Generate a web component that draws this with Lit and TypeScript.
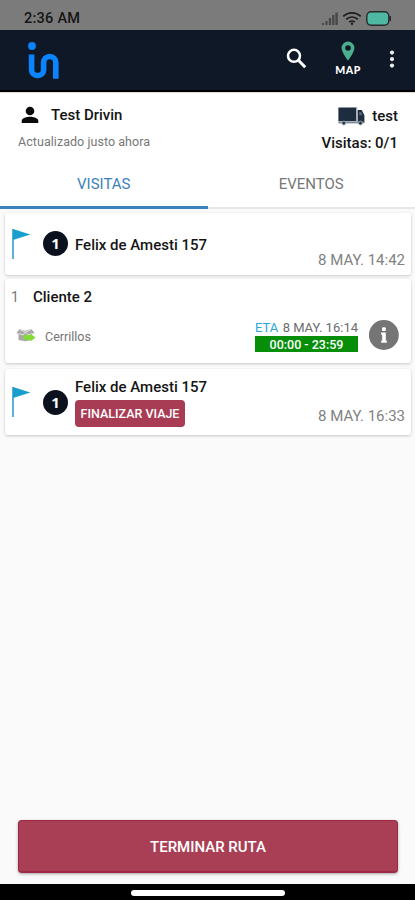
import { LitElement, html, css, svg } from "lit";
import { customElement, property } from "lit/decorators.js";

@customElement("status-bar")
class StatusBar extends LitElement {
  static styles = css`
    :host { display: flex; height: 30px; box-sizing: border-box; padding: 8px 23px 0 24px; background: #7b7b7b; justify-content: space-between; align-items: flex-start; }
    .time { font-size: 14.5px; font-weight: 500; line-height: 22px; letter-spacing: 0.25px; color: #151515; }
    .icons { display: block; }
  `;
  render() {
    return html`<span class="time">2:36 AM</span>
      <svg class="icons" width="70" height="20" viewBox="322 8 70 20">
        <g fill="#484848">
          <rect x="322" y="23" width="2" height="2" /><rect x="325.4" y="21" width="2.2" height="4" />
          <rect x="328.8" y="18" width="2.3" height="7" /><rect x="332.2" y="15" width="2.3" height="10" />
          <rect x="335.4" y="12.5" width="2.4" height="12.5" />
        </g>
        <g fill="none" stroke="#1d1d1d" stroke-width="1.7">
          <path d="M343.2 16.4a12.6 12.6 0 0 1 17.6 0" /><path d="M346.2 19.4a8.2 8.2 0 0 1 11.6 0" /><path d="M349.2 22.2a4 4 0 0 1 5.6 0" />
        </g>
        <circle cx="352" cy="23.8" r="1.2" fill="#1d1d1d" />
        <rect x="366.8" y="11.8" width="22" height="13.4" rx="4.4" fill="#4fb8a2" stroke="#292929" stroke-width="1.4" />
        <path d="M390.2 16v5" stroke="#292929" stroke-width="1.6" />
      </svg>`;
  }
}

@customElement("nav-bar")
class NavBar extends LitElement {
  static styles = css`
    :host { display: flex; height: 62px; box-sizing: border-box; background: #0f1826; border-bottom: 2px solid #000; padding: 0 17px 0 26px; justify-content: space-between; align-items: flex-start; }
    .logo { margin-top: 10px; }
    .actions { display: flex; }
    .search { margin: 17px 26px 0 0; }
    .map { display: flex; flex-direction: column; align-items: center; width: 30px; margin: 11px 23px 0 0; }
    .label { font: 900 10.5px/13px Lato, Inter, sans-serif; letter-spacing: 0.5px; color: #fff; margin-top: 3px; }
    .more { margin-top: 19px; }
    svg { display: block; }
  `;
  render() {
    return html`<svg class="logo" width="36" height="42" viewBox="26 40 36 42">
        <circle cx="32" cy="46" r="3.9" fill="#0a84ff" />
        <path d="M31.6 54.5V70a5.5 5.5 0 0 0 5.5 5.5h1a5.5 5.5 0 0 0 5.5-5.5v-7.5a6 6 0 0 1 6-6h.2a6 6 0 0 1 6 6v16.2" fill="none" stroke="#0a84ff" stroke-width="5.6" />
      </svg>
      <div class="actions">
        <svg class="search" width="22" height="24" viewBox="285 47 22 24">
          <circle cx="294" cy="55.8" r="6" fill="none" stroke="#fff" stroke-width="2.5" />
          <path d="M298.2 60l7 7.2" stroke="#fff" stroke-width="3" />
        </svg>
        <div class="map">
          <svg width="14" height="20" viewBox="0 0 14 20"><path fill="#4bae8e" fill-rule="evenodd" d="M7 .5A6.4 6.4 0 0 0 .6 7C.6 11.5 7 19.5 7 19.5S13.4 11.5 13.4 7A6.4 6.4 0 0 0 7 .5M7 4.2a2.8 2.8 0 1 1 0 5.6a2.8 2.8 0 0 1 0-5.6" /></svg>
          <span class="label">MAP</span>
        </div>
        <svg class="more" width="12" height="22" viewBox="386 49 12 22" fill="#e9ebef"><circle cx="392" cy="52.6" r="2.1" /><circle cx="392" cy="59.1" r="2.1" /><circle cx="392" cy="65.6" r="2.1" /></svg>
      </div>`;
  }
}

@customElement("route-header")
class RouteHeader extends LitElement {
  static styles = css`
    :host { display: block; background: #fff; border-top: 1px solid #deddd3; box-sizing: border-box; height: 117px; color: #141414; }
    .info { display: flex; justify-content: space-between; height: 72px; box-sizing: border-box; padding: 8px 17px 0 18px; }
    .row { display: flex; align-items: center; height: 27px; font-size: 15px; font-weight: 500; }
    .user { margin: 0 12px 0 3px; }
    .updated { font-size: 12.5px; line-height: 27px; color: #777; letter-spacing: 0.05px; }
    .right { display: flex; flex-direction: column; align-items: flex-end; }
    .truck { margin: 3px 7px 0 0; }
    .test { margin-top: 3px; }
    .count { font-size: 15px; line-height: 31px; font-weight: 500; }
    .tabs { display: flex; height: 44px; }
    .tab { flex: 1; box-sizing: border-box; text-align: center; font-size: 15px; line-height: 38px; color: #777; border-bottom: 2px solid #e8e8e8; }
    .active { color: #3d7fb8; border-bottom: 3px solid #3d82b8; }
  `;
  render() {
    return html`<div class="info">
        <div>
          <div class="row"><svg class="user" width="18" height="18" viewBox="0 0 18 18"><circle cx="9" cy="5" r="4.3" fill="#0b0b0b" /><path d="M.7 17v-2.1C.7 12 6 10.8 9 10.8s8.3 1.2 8.3 4.1V17z" fill="#0b0b0b" /></svg><span>Test Drivin</span></div>
          <div class="updated">Actualizado justo ahora</div>
        </div>
        <div class="right">
          <div class="row"><svg class="truck" width="27" height="19" viewBox="0 0 27 19">
            <path d="M.4.5h18v13.7H.4zM19.6 3h4.1l2.7 5.2v7.6h-6.8z" fill="#1d2c3f" /><path d="M.4 14.6h25.8v1.8H.4z" fill="#7d8997" />
            <path d="M21.2 5h2l1.4 3.2h-3.4z" fill="#52657a" /><path d="M18.9.5v14" stroke="#a9b2bc" stroke-width=".9" />
            <g fill="#27384b" stroke="#b6bec8" stroke-width=".8"><circle cx="5.8" cy="16.1" r="2" /><circle cx="22.4" cy="16.1" r="2" /></g>
          </svg><span class="test">test</span></div>
          <div class="count">Visitas: 0/1</div>
        </div>
      </div>
      <div class="tabs"><div class="tab active">VISITAS</div><div class="tab">EVENTOS</div></div>`;
  }
}

const flag = svg`<path d="M1 1v30" stroke="#4aa8cf" stroke-width="1.8" /><path d="M1 1l17.4 5.5L1 12z" fill="#199fcb" />`;

@customElement("depot-card")
class DepotCard extends LitElement {
  static styles = css`
    :host { display: flex; box-sizing: border-box; background: #fff; border-radius: 3px; box-shadow: 0 1px 3px rgba(0, 0, 0, 0.2); padding: 0 6px 0 7px; }
    .flag { margin: 15px 12px 0 0; flex: none; }
    .badge { flex: none; width: 25px; height: 25px; border-radius: 50%; background: #0c111e; color: #fff; font: 700 15px/25px "Noto Sans", sans-serif; text-align: center; margin: 18px 7px 0 0; }
    .flag.low { margin-top: 17px; }
    .badge.low { margin-top: 21px; }
    .body { flex: 1; padding-top: 22px; }
    .compact { padding-top: 8px; }
    .name { font-size: 15px; line-height: 20px; font-weight: 500; color: #151515; white-space: nowrap; }
    .finish { display: block; border: 0; width: 110px; height: 27px; border-radius: 4px; background: #a83c55; color: #fff; font: 500 12.5px/26px Roboto, sans-serif; padding: 0; margin-top: 3px; white-space: nowrap; }
    .when { font-size: 15px; line-height: 18px; color: #828282; align-self: flex-end; white-space: nowrap; margin-bottom: 6px; }
    .raised { margin-bottom: 10px; }
  `;
  @property() when = "";
  @property({ type: Boolean }) closing = false;
  render() {
    const low = this.closing ? "low" : "";
    return html`<svg class="flag ${low}" width="19" height="32" viewBox="0 0 19 32">${flag}</svg>
      <div class="badge ${low}">1</div>
      <div class="body ${this.closing ? "compact" : ""}">
        <div class="name">Felix de Amesti 157</div>
        ${this.closing ? html`<button class="finish">FINALIZAR VIAJE</button>` : ""}
      </div>
      <div class="when ${this.closing ? "raised" : ""}">${this.when}</div>`;
  }
}

@customElement("visit-card")
class VisitCard extends LitElement {
  static styles = css`
    :host { display: flex; flex-direction: column; box-sizing: border-box; background: #fff; border-radius: 3px; box-shadow: 0 1px 3px rgba(0, 0, 0, 0.2); padding: 8px 12px 0 6px; }
    .head { display: flex; line-height: 20px; font-size: 15px; }
    .num { width: 22px; color: #777; font-size: 14px; }
    .client { font-weight: 500; color: #151515; }
    .main { display: flex; align-items: flex-start; padding-top: 12px; }
    .box { margin: 9px 9px 0 5px; }
    .place { flex: 1; font-size: 12.5px; line-height: 18px; color: #747474; margin-top: 9px; }
    .eta { width: 103px; margin-right: 11px; }
    .line { display: flex; justify-content: space-between; font-size: 13px; line-height: 17px; color: #6c6c6c; white-space: nowrap; }
    .tag { color: #2ca6d6; }
    .window { background: #068e09; color: #fff; font-size: 12.5px; font-weight: 500; line-height: 17px; height: 16px; text-align: center; }
    .detail { display: block; margin-top: 1px; }
  `;
  render() {
    return html`<div class="head"><span class="num">1</span><span class="client">Cliente 2</span></div>
      <div class="main">
        <svg class="box" width="20" height="14" viewBox="0 0 20 14">
          <path d="M3.5 1l6 1.7L15.5 1l3 4-2.6 1v6L9.5 13.3 2.5 12V6L.5 5z" fill="#a7a7a7" />
          <path d="M3.5 1.5l6 2.5 6-2.5M9.5 4L7 7 2.5 5.5M9.5 4l2.5 3 4.5-1.5" fill="none" stroke="#e4e4e4" stroke-width="1" />
          <path d="M7.5 7h7V5.4l5 4-5 4v-1.600h-7z" fill="#83dc34" />
        </svg>
        <span class="place">Cerrillos</span>
        <div class="eta"><div class="line"><span class="tag">ETA</span><span>8 MAY. 16:14</span></div><div class="window">00:00 - 23:59</div></div>
        <svg class="detail" width="30" height="30" viewBox="0 0 30 30"><circle cx="14.8" cy="15" r="15" fill="#757575" /><rect x="13" y="7.2" width="3.8" height="3.8" rx="1" fill="#fff" /><path d="M12.2 12.600h4.600v8h1v2.200h-5.600v-2.200h1v-5.800h-1z" fill="#fff" /></svg>
      </div>`;
  }
}

@customElement("app-root")
class AppRoot extends LitElement {
  static styles = css`
    :host { display: flex; flex-direction: column; height: 900px; width: 415px; overflow: hidden; background: #fafafa; font-family: Roboto, "Liberation Sans", sans-serif; }
    .list { flex: 1; padding: 4px 4px 0 5px; }
    .first { height: 62px; margin-bottom: 4px; }
    .visit { height: 84px; margin-bottom: 6px; }
    .last { height: 66px; }
    .foot { padding: 0 17px 11px 18px; }
    .end { display: block; width: 100%; height: 53px; border: 1px solid #9d2847; border-bottom-width: 2px; border-radius: 4px; background: #a83f55; color: #fff; font: 500 15px Roboto, sans-serif; padding: 2px 0 0; box-shadow: 0 1px 3px rgba(0, 0, 0, 0.35); }
    .home { height: 16px; background: #000; display: flex; justify-content: center; align-items: center; }
    .pill { width: 154px; height: 6px; border-radius: 3px; background: #fff; margin-top: 1px; }
  `;
  render() {
    return html`<status-bar></status-bar>
      <nav-bar></nav-bar>
      <route-header></route-header>
      <div class="list">
        <depot-card class="first" when="8 MAY. 14:42"></depot-card>
        <visit-card class="visit"></visit-card>
        <depot-card class="last" when="8 MAY. 16:33" closing></depot-card>
      </div>
      <div class="foot"><button class="end">TERMINAR RUTA</button></div>
      <div class="home"><div class="pill"></div></div>`;
  }
}
